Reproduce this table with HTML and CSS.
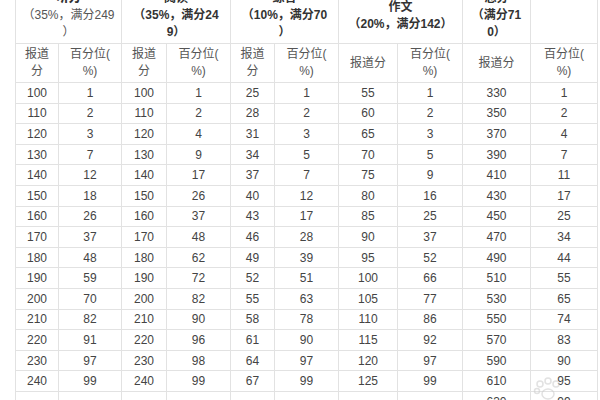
FILE: index.html
```html
<!DOCTYPE html>
<html lang="zh">
<head>
<meta charset="utf-8">
<link rel="stylesheet" href="styles.css">
</head>
<body>
<div class="page">
<table class="score">
  <colgroup>
    <col class="c43"><col class="c63"><col class="c45"><col class="c64"><col class="c44"><col class="c64"><col class="c59"><col class="c65"><col class="c68"><col class="c67">
  </colgroup>
  <thead>
    <tr class="h1">
      <th colspan="2"><b>听力</b><br><span class="reg">（35%，满分249<br>）</span></th>
      <th colspan="2">阅读<br>（35%，满分24<br>9）</th>
      <th colspan="2">综合<br>（10%，满分70<br>）</th>
      <th colspan="2">作文<br>（20%，满分142）</th>
      <th>总分<br>（满分71<br>0）</th>
      <th></th>
    </tr>
    <tr class="h2">
      <td>报道<br>分</td><td>百分位(<br>%)</td>
      <td>报道<br>分</td><td>百分位(<br>%)</td>
      <td>报道<br>分</td><td>百分位(<br>%)</td>
      <td>报道分</td><td>百分位(<br>%)</td>
      <td>报道分</td><td>百分位(<br>%)</td>
    </tr>
  </thead>
  <tbody>
    <tr><td>100</td><td>1</td><td>100</td><td>1</td><td>25</td><td>1</td><td>55</td><td>1</td><td>330</td><td>1</td></tr>
    <tr><td>110</td><td>2</td><td>110</td><td>2</td><td>28</td><td>2</td><td>60</td><td>2</td><td>350</td><td>2</td></tr>
    <tr><td>120</td><td>3</td><td>120</td><td>4</td><td>31</td><td>3</td><td>65</td><td>3</td><td>370</td><td>4</td></tr>
    <tr><td>130</td><td>7</td><td>130</td><td>9</td><td>34</td><td>5</td><td>70</td><td>5</td><td>390</td><td>7</td></tr>
    <tr><td>140</td><td>12</td><td>140</td><td>17</td><td>37</td><td>7</td><td>75</td><td>9</td><td>410</td><td>11</td></tr>
    <tr><td>150</td><td>18</td><td>150</td><td>26</td><td>40</td><td>12</td><td>80</td><td>16</td><td>430</td><td>17</td></tr>
    <tr><td>160</td><td>26</td><td>160</td><td>37</td><td>43</td><td>17</td><td>85</td><td>25</td><td>450</td><td>25</td></tr>
    <tr><td>170</td><td>37</td><td>170</td><td>48</td><td>46</td><td>28</td><td>90</td><td>37</td><td>470</td><td>34</td></tr>
    <tr><td>180</td><td>48</td><td>180</td><td>62</td><td>49</td><td>39</td><td>95</td><td>52</td><td>490</td><td>44</td></tr>
    <tr><td>190</td><td>59</td><td>190</td><td>72</td><td>52</td><td>51</td><td>100</td><td>66</td><td>510</td><td>55</td></tr>
    <tr><td>200</td><td>70</td><td>200</td><td>82</td><td>55</td><td>63</td><td>105</td><td>77</td><td>530</td><td>65</td></tr>
    <tr><td>210</td><td>82</td><td>210</td><td>90</td><td>58</td><td>78</td><td>110</td><td>86</td><td>550</td><td>74</td></tr>
    <tr><td>220</td><td>91</td><td>220</td><td>96</td><td>61</td><td>90</td><td>115</td><td>92</td><td>570</td><td>83</td></tr>
    <tr><td>230</td><td>97</td><td>230</td><td>98</td><td>64</td><td>97</td><td>120</td><td>97</td><td>590</td><td>90</td></tr>
    <tr><td>240</td><td>99</td><td>240</td><td>99</td><td>67</td><td>99</td><td>125</td><td>99</td><td>610</td><td>95</td></tr>
    <tr><td></td><td></td><td></td><td></td><td></td><td></td><td></td><td></td><td>630</td><td>99</td></tr>
  </tbody>
</table>
<svg class="watermark" width="40" height="26" viewBox="0 0 40 26" aria-hidden="true">
  <g fill="none" stroke="#cfcfcf" stroke-width="1.5">
    <circle cx="12" cy="8" r="3"/>
    <circle cx="20" cy="5" r="3"/>
    <circle cx="28" cy="8" r="3"/>
    <circle cx="9" cy="15" r="2.5"/>
    <ellipse cx="20" cy="18" rx="6" ry="5"/>
  </g>
</svg>
</div>
</body>
</html>
```

FILE: styles.css
```css
html, body {
  margin: 0;
  padding: 0;
  background: #ffffff;
  overflow: hidden;
}
.page {
  position: relative;
  width: 600px;
  height: 400px;
  overflow: hidden;
}
.score {
  margin: -13px 0 0 15px;
  border-collapse: collapse;
  table-layout: fixed;
  width: 582px;
  font-family: "Liberation Sans", "Noto Sans CJK SC", sans-serif;
  font-size: 12px;
  color: #444;
}
.c43 { width: 43px; }
.c63 { width: 63px; }
.c45 { width: 45px; }
.c64 { width: 64px; }
.c44 { width: 44px; }
.c59 { width: 59px; }
.c65 { width: 65px; }
.c68 { width: 68px; }
.c67 { width: 67px; }
.score th,
.score td {
  border: 1px solid #e2e2e2;
  padding: 0;
  text-align: center;
  vertical-align: middle;
  line-height: 17px;
}
.score th {
  font-weight: bold;
  color: #333;
}
.reg {
  font-weight: normal;
  color: #555;
}
.h1 th { height: 55px; }
.h2 td { height: 38px; color: #555; }
.score tbody td { height: 19.6px; line-height: 14px; }
.watermark {
  position: absolute;
  left: 528px;
  top: 376px;
  opacity: 0.6;
}
```
